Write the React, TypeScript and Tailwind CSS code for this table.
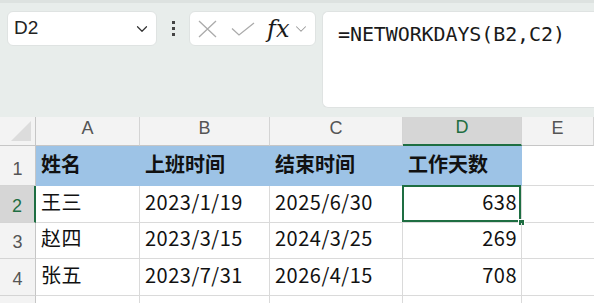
import React from "react";
import { ChevronDown } from "lucide-react";

const cjk = { fontFamily: '"Noto Sans CJK SC", "Noto Sans", sans-serif' };
const latin = { fontFamily: '"Liberation Sans", Arial, sans-serif' };

const cols = ["A", "B", "C", "D", "E"];

type Row = { n: number; cells: (string | number)[] };

const rows: Row[] = [
  { n: 1, cells: ["姓名", "上班时间", "结束时间", "工作天数"] },
  { n: 2, cells: ["王三", "2023/1/19", "2025/6/30", 638] },
  { n: 3, cells: ["赵四", "2023/3/15", "2024/3/25", 269] },
  { n: 4, cells: ["张五", "2023/7/31", "2026/4/15", 708] },
];

function ColHeader({ label, active }: { label: string; active?: boolean }) {
  return (
    <div
      className={
        "flex items-end justify-center pb-[3px] text-[18px] border-r border-[#d4d4d4] " +
        (active
          ? "bg-[#d6d6d6] text-[#1e6e42] border-b-2 border-b-[#1e6e42]"
          : "bg-[#f3f3f3] text-[#555555] border-b border-b-[#c6c6c6]")
      }
      style={latin}
    >
      {label}
    </div>
  );
}

function RowHeader({ n, active }: { n: number; active?: boolean }) {
  return (
    <div
      className={
        "flex items-end justify-center pb-[2px] text-[18px] border-b border-[#d4d4d4] " +
        (active
          ? "bg-[#d6d6d6] text-[#1e6e42] border-r-2 border-r-[#1e6e42]"
          : "bg-[#f3f3f3] text-[#555555] border-r border-r-[#c6c6c6]")
      }
      style={latin}
    >
      {n}
    </div>
  );
}

export default function App() {
  return (
    <div className="w-[594px] h-[303px] overflow-hidden bg-[#e8edeb] flex flex-col">
      <div className="h-[3px] bg-[#dde2e0]" />
      {/* formula bar */}
      <div className="flex items-start pl-[7px] pt-[8px] h-[114px]">
        <div className="w-[150px] h-[35px] bg-white rounded-[6px] border border-[#dfe3e2] flex items-center pl-[6px] pr-[5px]">
          <span className="text-[19px] text-[#222] flex-1" style={latin}>
            D2
          </span>
          <ChevronDown size={18} strokeWidth={1.6} className="text-[#333]" />
        </div>
        <div className="w-[32px] h-[35px] flex flex-col items-center justify-center gap-[3px]">
          <div className="w-[3px] h-[3px] bg-[#444]" />
          <div className="w-[3px] h-[3px] bg-[#444]" />
          <div className="w-[3px] h-[3px] bg-[#444]" />
        </div>
        <div className="w-[127px] h-[35px] bg-white rounded-[6px] border border-[#dfe3e2] flex items-center pl-[8px]">
          <svg width="19" height="18" viewBox="0 0 19 18" className="shrink-0">
            <path d="M1 1 L18 17 M18 1 L1 17" stroke="#ababab" strokeWidth="1.3" fill="none" />
          </svg>
          <svg width="24" height="14" viewBox="0 0 24 14" className="shrink-0 ml-[14px]">
            <path d="M1 6.5 L8 13 L23 1" stroke="#ababab" strokeWidth="1.3" fill="none" />
          </svg>
          <span
            className="ml-[12px] text-[24px] italic text-[#1a1a1a] leading-none"
            style={{ fontFamily: '"DejaVu Serif", "Liberation Serif", serif' }}
          >
            fx
          </span>
          <ChevronDown size={18} strokeWidth={1.4} className="text-[#9a9a9a] ml-[3px]" />
        </div>
        <div className="ml-[6px] flex-1 h-[97px] bg-white rounded-l-[6px] border border-r-0 border-[#dfe3e2] pl-[15px] pt-[7px]">
          <span
            className="text-[20px] text-[#1a1a1a] tracking-[-0.1px]"
            style={{ fontFamily: '"DejaVu Sans Mono", "Liberation Mono", monospace' }}
          >
            =NETWORKDAYS(B2,C2)
          </span>
        </div>
      </div>

      {/* sheet grid */}
      <div
        className="grid flex-1 bg-white"
        style={{
          gridTemplateColumns: "36px 104px 130px 133px 119px 1fr",
          gridTemplateRows: "29px 40px 37px 36px 37px 1fr",
        }}
      >
        <div className="bg-[#f3f3f3] border-r border-b border-[#c6c6c6] relative">
          <svg className="absolute right-[4px] bottom-[4px]" width="20" height="20" viewBox="0 0 20 20">
            <polygon points="20,0 20,20 0,20" fill="#dcdcdc" />
          </svg>
        </div>
        {cols.map((c) => (
          <ColHeader key={c} label={c} active={c === "D"} />
        ))}

        {rows.map((r) => (
          <React.Fragment key={r.n}>
            <RowHeader n={r.n} active={r.n === 2} />
            {r.cells.map((v, i) => {
              const isHead = r.n === 1;
              const isNum = typeof v === "number";
              const selected = r.n === 2 && i === 3;
              return (
                <div
                  key={i}
                  className={
                    "relative flex items-end pb-[5px] text-[20px] text-[#111] border-r border-b " +
                    (isHead
                      ? "bg-[#9dc3e6] border-[#9dc3e6] font-bold pb-[6px] "
                      : "border-[#dadada] tracking-[0.5px] ") +
                    (isNum ? "justify-end pr-[4px] " : "pl-[5px] ")
                  }
                  style={cjk}
                >
                  {v}
                  {selected && (
                    <>
                      <div className="absolute -left-[1px] -top-[1px] right-0 bottom-0 border-2 border-[#1e6e42] pointer-events-none" />
                      <div className="absolute -right-[4px] -bottom-[4px] w-[7px] h-[7px] bg-[#1e6e42] border border-white" />
                    </>
                  )}
                </div>
              );
            })}
            <div className="border-b border-[#dadada]" />
          </React.Fragment>
        ))}

        <div className="bg-[#f3f3f3] border-r border-[#c6c6c6]" />
        <div className="border-r border-[#dadada]" />
        <div className="border-r border-[#dadada]" />
        <div className="border-r border-[#dadada]" />
        <div className="border-r border-[#dadada]" />
        <div />
      </div>
    </div>
  );
}
